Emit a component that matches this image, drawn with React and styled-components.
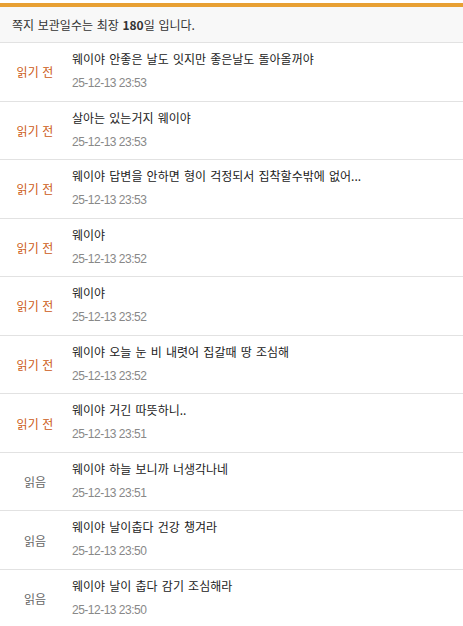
import React from "react";
import styled, { createGlobalStyle } from "styled-components";

const Global = createGlobalStyle`
  html, body { margin: 0; padding: 0; background: #fff; }
  body { font-family: "Noto Sans CJK KR", "Noto Sans", sans-serif; }
`;

const Wrap = styled.div`
  padding-top: 3px;
  width: 463px;
`;

const Notice = styled.div`
  border-top: 4px solid #e8a033;
  background: #f8f8f8;
  border-bottom: 1px solid #e2e2e2;
  height: 35px;
  padding-left: 12px;
  display: flex;
  align-items: center;
  font-size: 12px;
  color: #333;
  word-spacing: 1px;
  b { font-weight: 700; color: #333; }
`;

const List = styled.ul`
  list-style: none;
  margin: 0;
  padding: 0;
`;

const Row = styled.li`
  display: flex;
  height: 57.56px;
  border-bottom: 1px solid #e2e2e2;
  align-items: stretch;
`;

const Status = styled.div`
  width: 70px;
  flex: none;
  display: flex;
  align-items: center;
  justify-content: center;
  font-size: 12px;
  word-spacing: 1px;
  color: ${(p) => (p.$unread ? "#cc5a14" : "#666")};
`;

const Body = styled.div`
  display: flex;
  flex-direction: column;
  padding-left: 2px;
  padding-top: 7px;
`;

const Title = styled.div`
  font-size: 12px;
  color: #222;
  line-height: 18px;
  word-spacing: 1.5px;
`;

const Date = styled.div`
  font-family: "Liberation Sans", Arial, sans-serif;
  font-size: 12px;
  color: #888;
  line-height: 18px;
  margin-top: 6px;
  letter-spacing: -0.5px;
`;

const items = [
  ["웨이야 안좋은 날도 잇지만 좋은날도 돌아올꺼야", "25-12-13 23:53", true],
  ["살아는 있는거지 웨이야", "25-12-13 23:53", true],
  ["웨이야 답변을 안하면 형이 걱정되서 집착할수밖에 없어...", "25-12-13 23:53", true],
  ["웨이야", "25-12-13 23:52", true],
  ["웨이야", "25-12-13 23:52", true],
  ["웨이야 오늘 눈 비 내렷어 집갈때 땅 조심해", "25-12-13 23:52", true],
  ["웨이야 거긴 따뜻하니..", "25-12-13 23:51", true],
  ["웨이야 하늘 보니까 너생각나네", "25-12-13 23:51", false],
  ["웨이야 날이춥다 건강 챙겨라", "25-12-13 23:50", false],
  ["웨이야 날이 춥다 감기 조심해라", "25-12-13 23:50", false],
];

export default function App() {
  return (
    <Wrap>
      <Global />
      <Notice>
        <span>
          쪽지 보관일수는 최장 <b>180</b>일 입니다.
        </span>
      </Notice>
      <List>
        {items.map(([t, d, unread], i) => (
          <Row key={i}>
            <Status $unread={unread}>{unread ? "읽기 전" : "읽음"}</Status>
            <Body>
              <Title>{t}</Title>
              <Date>{d}</Date>
            </Body>
          </Row>
        ))}
      </List>
    </Wrap>
  );
}
